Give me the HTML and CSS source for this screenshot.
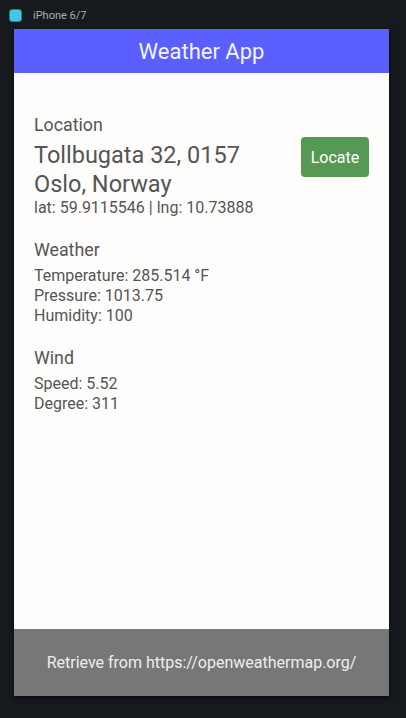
FILE: index.html
```html
<!DOCTYPE html>
<html>
<head>
<meta charset="utf-8">
<link rel="stylesheet" href="styles.css">
</head>
<body>
<div class="topbar">
  <span class="dev-icon"></span>
  <span class="dev-name">iPhone 6/7</span>
</div>
<div class="phone">
  <header class="header">Weather App</header>
  <main class="content">
    <section class="loc-row">
      <div class="loc-text">
        <div class="label">Location</div>
        <div class="address">Tollbugata 32, 0157<br>Oslo, Norway</div>
        <div class="line">lat: 59.9115546 | lng: 10.73888</div>
      </div>
      <button class="locate">Locate</button>
    </section>
    <section class="block">
      <div class="label">Weather</div>
      <div class="lines">
        <div class="line">Temperature: 285.514 °F</div>
        <div class="line">Pressure: 1013.75</div>
        <div class="line">Humidity: 100</div>
      </div>
    </section>
    <section class="block">
      <div class="label">Wind</div>
      <div class="lines">
        <div class="line">Speed: 5.52</div>
        <div class="line">Degree: 311</div>
      </div>
    </section>
  </main>
  <footer class="footer">Retrieve from https://openweathermap.org/</footer>
</div>
</body>
</html>
```
FILE: styles.css
```css
html, body {
  margin: 0;
  padding: 0;
}
body {
  background: #16191e;
  width: 406px;
  height: 718px;
  font-family: Roboto, "Liberation Sans", sans-serif;
  overflow: hidden;
}
.topbar {
  height: 29px;
  display: flex;
  align-items: center;
  padding-left: 9px;
  box-sizing: border-box;
}
.dev-icon {
  width: 11px;
  height: 11px;
  border-radius: 3px;
  background: #3fc9e3;
  border: 1px solid #2a7f93;
  margin-top: 1px;
}
.dev-name {
  margin-left: 11px;
  font-size: 11px;
  color: #a9adb3;
  margin-top: 1px;
}
.phone {
  margin-left: 14px;
  width: 375px;
  height: 667px;
  background: #fffdfb;
  display: flex;
  flex-direction: column;
  box-shadow: 0 2px 4px rgba(0,0,0,0.6);
}
.header {
  height: 44px;
  background: #5b5ffe;
  color: #f4f4ff;
  font-size: 22px;
  display: flex;
  align-items: center;
  justify-content: center;
}
.content {
  flex: 1;
  padding: 41px 20px 0 20px;
  color: #555;
}
.loc-row {
  display: flex;
  justify-content: space-between;
  align-items: flex-start;
}
.label {
  font-size: 17.8px;
  line-height: 22px;
}
.address {
  font-size: 23.5px;
  line-height: 28.5px;
  margin-top: 5px;
}
.line {
  font-size: 16px;
  line-height: 20px;
}
.locate {
  margin-top: 23px;
  width: 68px;
  height: 40px;
  border: none;
  border-radius: 4px;
  background: #559955;
  color: #fff;
  font-family: Roboto, "Liberation Sans", sans-serif;
  font-size: 16px;
  padding: 0;
}
.block {
  margin-top: 21px;
}
.lines {
  margin-top: 5px;
}
.footer {
  height: 67px;
  background: #777777;
  color: #eeeeee;
  font-size: 16px;
  display: flex;
  align-items: center;
  justify-content: center;
}
```
